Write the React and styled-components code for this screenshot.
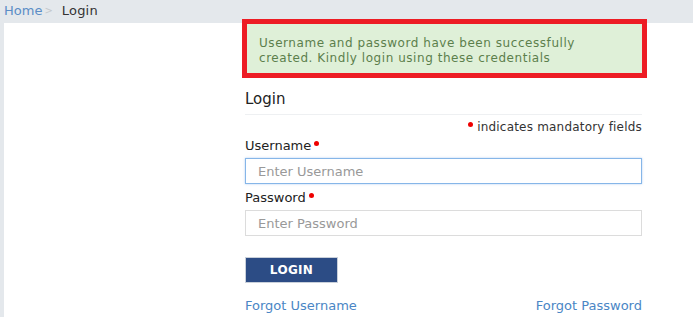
import React from "react"
import styled, { createGlobalStyle } from "styled-components"

const GlobalStyle = createGlobalStyle`
  html, body {
    margin: 0;
    padding: 0;
    background: #e4e8ec;
    font-family: "DejaVu Sans", Verdana, sans-serif;
  }
  * { box-sizing: border-box; }
`

const App = () => {
  return (
    <>
      <GlobalStyle />
      <Page>
        <Breadcrumb>
          <Crumb href="#">Home</Crumb>
          <Sep>&gt;</Sep>
          <Current>Login</Current>
        </Breadcrumb>
        <Panel>
          <Column>
            <Alert>
              Username and password have been successfully created. Kindly login using these credentials
            </Alert>

            <Heading>Login</Heading>
            <Mandatory><Dot />indicates mandatory fields</Mandatory>

            <Field first>
              <Label>Username<Dot /></Label>
              <Input type="text" placeholder="Enter Username" focused />
            </Field>

            <Field>
              <Label>Password<Dot /></Label>
              <Input type="password" placeholder="Enter Password" />
            </Field>

            <Button>LOGIN</Button>

            <Links>
              <Link href="#">Forgot Username</Link>
              <Link href="#">Forgot Password</Link>
            </Links>
          </Column>
        </Panel>
      </Page>
    </>
  )
}

export default App

//-----------------------------------------------STYLES-----------------------------------------------//

const Page = styled.div`
    width: 693px;
    height: 317px;
    overflow: hidden;
    display: flex;
    flex-direction: column;
`
const Breadcrumb = styled.div`
    height: 23px;
    display: flex;
    align-items: center;
    padding: 0 0 2px 4px;
    font-size: 13px;
`
const Crumb = styled.a`
    color: #5b8dc6;
    text-decoration: none;
`
const Sep = styled.span`
    color: #c4c8cc;
    font-size: 10px;
    margin: 0 9px 0 2px;
`
const Current = styled.span`
    color: #333;
    letter-spacing: 0.2px;
`
const Panel = styled.div`
    flex: 1;
    margin-left: 4px;
    background: #fff;
`
const Column = styled.div`
    width: 397px;
    margin-left: 241px;
    display: flex;
    flex-direction: column;
`
const Alert = styled.div`
    margin: -4px 0 0 -3px;
    width: 405px;
    height: 59px;
    border: 5px solid #ed1c24;
    background: #dff0d8;
    color: #5c7f4c;
    font-size: 12px;
    letter-spacing: 0.55px;
    line-height: 15px;
    padding: 12px 20px 0 12px;
`
const Heading = styled.h2`
    margin: 12px 0 0;
    font-size: 15px;
    font-weight: normal;
    color: #222;
    line-height: 18px;
    padding-bottom: 6px;
    border-bottom: 1px solid #eef0f2;
`
const Mandatory = styled.div`
    align-self: flex-end;
    margin-top: 5px;
    font-size: 12px;
    letter-spacing: 0.2px;
    color: #333;
    display: flex;
    align-items: center;
    gap: 4px;
`
const Dot = styled.span`
    display: inline-block;
    width: 5px;
    height: 5px;
    border-radius: 50%;
    background: #e00;
    margin: 0 0 6px 3px;
`
const Field = styled.div`
    display: flex;
    flex-direction: column;
    margin-top: ${props => props.first ? "3px" : "5px"};
`
const Label = styled.label`
    font-size: 13px;
    color: #222;
    line-height: 18px;
    margin-bottom: 3px;
    display: flex;
    align-items: center;
`
const Input = styled.input`
    height: 26px;
    width: 397px;
    border: 1px solid ${props => props.focused ? "#86b6e8" : "#dcdcdc"};
    box-shadow: ${props => props.focused ? "0 0 2px rgba(102,160,230,0.5)" : "none"};
    font-family: "DejaVu Sans", Verdana, sans-serif;
    font-size: 13px;
    padding: 0 12px;
    outline: none;
    &::placeholder { color: #999; }
`
const Button = styled.button`
    margin-top: 21px;
    width: 93px;
    height: 26px;
    background: #2c4c85;
    border: 1px solid #c9d0da;
    color: #fff;
    font-family: "DejaVu Sans", Verdana, sans-serif;
    font-weight: bold;
    font-size: 12px;
    letter-spacing: 0.3px;
`
const Links = styled.div`
    margin-top: 15px;
    display: flex;
    justify-content: space-between;
`
const Link = styled.a`
    color: #4a86c5;
    font-size: 13px;
    text-decoration: none;
`
